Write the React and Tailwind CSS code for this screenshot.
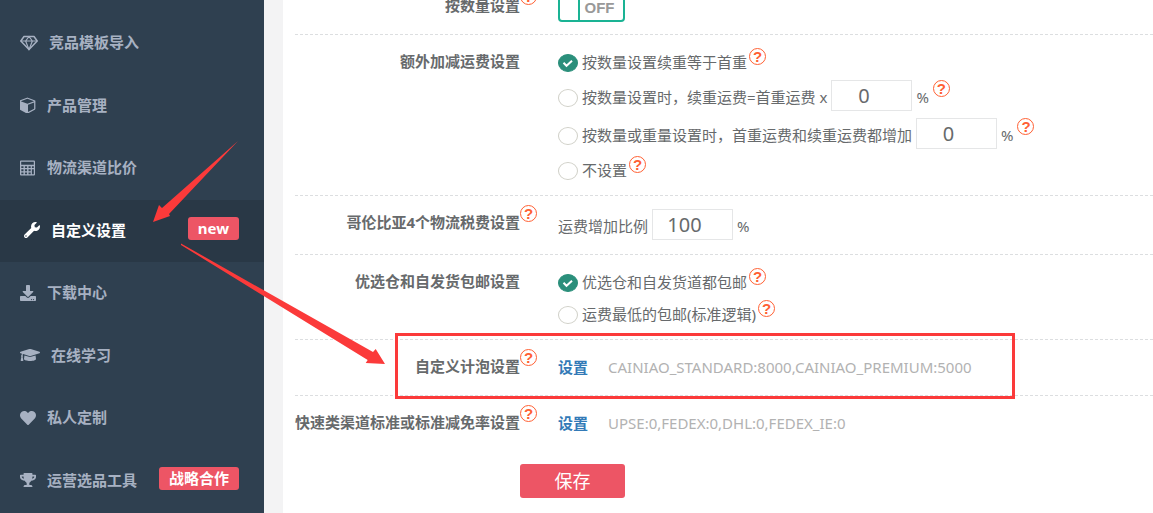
import React from 'react';
import { FaDownload, FaGraduationCap, FaHeart, FaTrophy, FaWrench } from 'react-icons/fa';

const DiamondIcon = () => (
  <svg viewBox="0 0 18 16" className="w-[18px] h-4" fill="none" stroke="currentColor" strokeWidth="1.5" strokeLinejoin="round">
    <path d="M4 1.5h10l3.2 4.5L9 14.6.8 6z" />
    <path d="M.8 6h16.4M9 1.5 5.6 6 9 14.6 12.4 6z" strokeWidth="1.2" />
  </svg>
);

const CubeIcon = () => (
  <svg viewBox="64 64 1664 1664" className="w-4 h-4" fill="currentColor">
    <path d="M896 1629l640-349v-636l-640 233v752zm-64-865l698-254-698-254-698 254zm832-252v768q0 35-18 65t-49 47l-704 384q-28 16-61 16t-61-16l-704-384q-31-17-49-47t-18-65v-768q0-40 23-73t61-47l704-256q22-8 44-8t44 8l704 256q38 14 61 47t23 73z" />
  </svg>
);

const CalculatorIcon = () => (
  <svg viewBox="0 0 16 16" className="w-4 h-4" fill="currentColor" fillRule="evenodd">
    <path d="M1 .5h13a1 1 0 0 1 1 1v13a1 1 0 0 1-1 1H1a1 1 0 0 1-1-1v-13a1 1 0 0 1 1-1zM1.2 1.7v3h12.6v-3zM1.3 6.2v1.9h2.2V6.2zm3.6 0v1.9h2.2V6.2zm3.6 0v1.9h2.2V6.2zm3.4 0v1.9h1.9V6.2zM1.3 9.3v1.9h2.2V9.3zm3.6 0v1.9h2.2V9.3zm3.6 0v1.9h2.2V9.3zM1.3 12.4v1.9h2.2v-1.9zm3.6 0v1.9h2.2v-1.9zm3.6 0v1.9h2.2v-1.9zm3.4-3.1v5h1.9v-5z" />
  </svg>
);

const menu = [
  { text: '竞品模板导入', icon: <DiamondIcon /> },
  { text: '产品管理', icon: <CubeIcon /> },
  { text: '物流渠道比价', icon: <CalculatorIcon /> },
  { text: '自定义设置', icon: <FaWrench className="w-4 h-4" />, badge: 'new', active: true },
  { text: '下载中心', icon: <FaDownload className="w-4 h-4" /> },
  { text: '在线学习', icon: <FaGraduationCap className="w-5 h-5" /> },
  { text: '私人定制', icon: <FaHeart className="w-4 h-4" /> },
  { text: '运营选品工具', icon: <FaTrophy className="w-4 h-4" />, badge: '战略合作' },
];

const Sidebar = () => (
  <nav className="w-[264px] shrink-0 bg-[#2f4050] pt-3">
    <ul className="grid grid-rows-8 min-h-[500px]">
      {menu.map((item) => (
        <li key={item.text} className={item.active ? 'bg-[#293846] text-white' : 'text-[#a7b1c2]'}>
          <a
            href="#"
            className={
              item.active
                ? 'flex items-start pt-[17px] pl-6 pr-[25px] font-bold'
                : 'flex items-start pt-[17px] pl-5 pr-[25px] font-bold'
            }
          >
            <span className="flex items-center gap-[11px] leading-[27px]">
              {item.icon}
              {item.text}
            </span>
            {item.badge && (
              <span className="ml-auto rounded-[3px] bg-[#ed5565] px-[10px] leading-[23px] text-white">{item.badge}</span>
            )}
          </a>
        </li>
      ))}
    </ul>
  </nav>
);

const Help = () => (
  <span className="flex h-[17px] w-[17px] shrink-0 items-center justify-center self-start rounded-full border border-[#ff6033] font-['Liberation_Sans',sans-serif] text-[15px] leading-none font-bold text-[#ff6033]">
    ?
  </span>
);

const Row = ({ label, help, last, children }) => (
  <div
    className={
      last
        ? 'flex min-h-[56px] gap-[38px] pt-[13px] pb-[10px]'
        : 'flex min-h-[56px] gap-[38px] border-b border-dashed border-[#dcdee0] pt-[13px] pb-[10px]'
    }
  >
    <div className="relative h-[29px] w-[225px] shrink-0 text-right font-bold whitespace-nowrap leading-[27px]">
      {label}
      {help && (
        <span className="absolute -top-1 left-full">
          <Help />
        </span>
      )}
    </div>
    <div className="flex flex-col gap-[3px]">{children}</div>
  </div>
);

const Line = ({ children }) => <div className="flex min-h-[29px] items-center gap-1 whitespace-nowrap">{children}</div>;

const Radio = ({ id, name, text, checked, help }) => (
  <>
    <span className="relative flex">
      <input
        id={id}
        type="radio"
        name={name}
        defaultChecked={checked}
        className="peer h-[18px] w-5 appearance-none rounded-[50%] border border-[#d0d0c8] bg-white checked:border-[#2b8f7b] checked:bg-[#2b8f7b]"
      />
      <svg
        viewBox="0 0 20 18"
        className="pointer-events-none absolute inset-0 hidden h-[18px] w-5 peer-checked:block"
        fill="none"
        stroke="#fff"
        strokeWidth="2"
      >
        <path d="M5.5 8.8l3 3 5.5-5" />
      </svg>
    </span>
    <span className="flex gap-0.5 self-stretch items-center">
      <label htmlFor={id}>{text}</label>
      {help && <Help />}
    </span>
  </>
);

const Percent = ({ label, value, help }) => (
  <>
    <input
      type="text"
      aria-label={label}
      defaultValue={value}
      className="mb-1 h-[31px] w-[81px] border border-[#e5e6e7] bg-white pr-4 text-center text-[20px]"
    />
    <span>%</span>
    {help && <Help />}
  </>
);

const Custom = ({ value }) => (
  <div className="flex h-[29px] items-center gap-5 whitespace-nowrap">
    <a href="#" className="font-bold text-[#337ab7]">设置</a>
    <span className="text-[#b2b2b2]">{value}</span>
  </div>
);

// red box and arrows drawn over the page
const Marks = () => (
  <>
    <div className="pointer-events-none absolute top-[333px] left-[395px] h-[66px] w-[620px] border-3 border-[#fb3a3a]" />
    <svg className="pointer-events-none absolute top-0 left-0" width="400" height="400" fill="#fb3a3a">
      <path d="M153 222l6-17 3 3 76-67-69 73 1 2z" />
      <path d="M181 243.5L373 352l2.7-3 9.3 15-19.3-1 2-3L181 245z" />
    </svg>
  </>
);

const App = () => {
  return (
    <div className="relative flex min-h-screen overflow-hidden bg-[#f3f3f4] text-[15px] leading-[23px] text-[#676a6c] font-['Noto_Sans','Noto_Sans_CJK_SC',sans-serif]">
      <Sidebar />
      <main className="ml-[19px] min-w-0 flex-1 bg-white pl-3">
        <div className="-mt-[21px]">
          <Row label="按数量设置" help>
            <label className="flex h-[30px] w-[67px] cursor-pointer overflow-hidden rounded-[4px] border-2 border-[#1ab394]">
              <input type="checkbox" aria-label="按数量设置" className="sr-only" />
              <span className="w-5 border-r-2 border-[#1ab394]" />
              <span className="flex-1 pr-1 text-center font-['Liberation_Sans',sans-serif] leading-[27px] font-bold text-[#999]">OFF</span>
            </label>
          </Row>
          <Row label="额外加减运费设置">
            <Line>
              <Radio id="extra-1" name="extra" text="按数量设置续重等于首重" checked help />
            </Line>
            <Line>
              <Radio id="extra-2" name="extra" text="按数量设置时，续重运费=首重运费 x" />
              <Percent label="首重运费比例" value="0" help />
            </Line>
            <Line>
              <Radio id="extra-3" name="extra" text="按数量或重量设置时，首重运费和续重运费都增加" />
              <Percent label="运费都增加" value="0" help />
            </Line>
            <Line>
              <Radio id="extra-4" name="extra" text="不设置" help />
            </Line>
          </Row>
          <Row label="哥伦比亚4个物流税费设置" help>
            <Line>
              <span>运费增加比例</span>
              <Percent label="运费增加比例" value="100" />
            </Line>
          </Row>
          <Row label="优选仓和自发货包邮设置">
            <Line>
              <Radio id="ship-1" name="ship" text="优选仓和自发货道都包邮" checked help />
            </Line>
            <Line>
              <Radio id="ship-2" name="ship" text="运费最低的包邮(标准逻辑)" help />
            </Line>
          </Row>
          <Row label="自定义计泡设置" help>
            <Custom value="CAINIAO_STANDARD:8000,CAINIAO_PREMIUM:5000" />
          </Row>
          <Row label="快速类渠道标准或标准减免率设置" help last>
            <Custom value="UPSE:0,FEDEX:0,DHL:0,FEDEX_IE:0" />
          </Row>
        </div>
        <button type="button" className="mt-3 ml-[225px] h-[34px] w-[105px] rounded-[3px] bg-[#ed5565] text-[18px] text-white">
          保存
        </button>
      </main>
      <Marks />
    </div>
  );
};

export default App;
